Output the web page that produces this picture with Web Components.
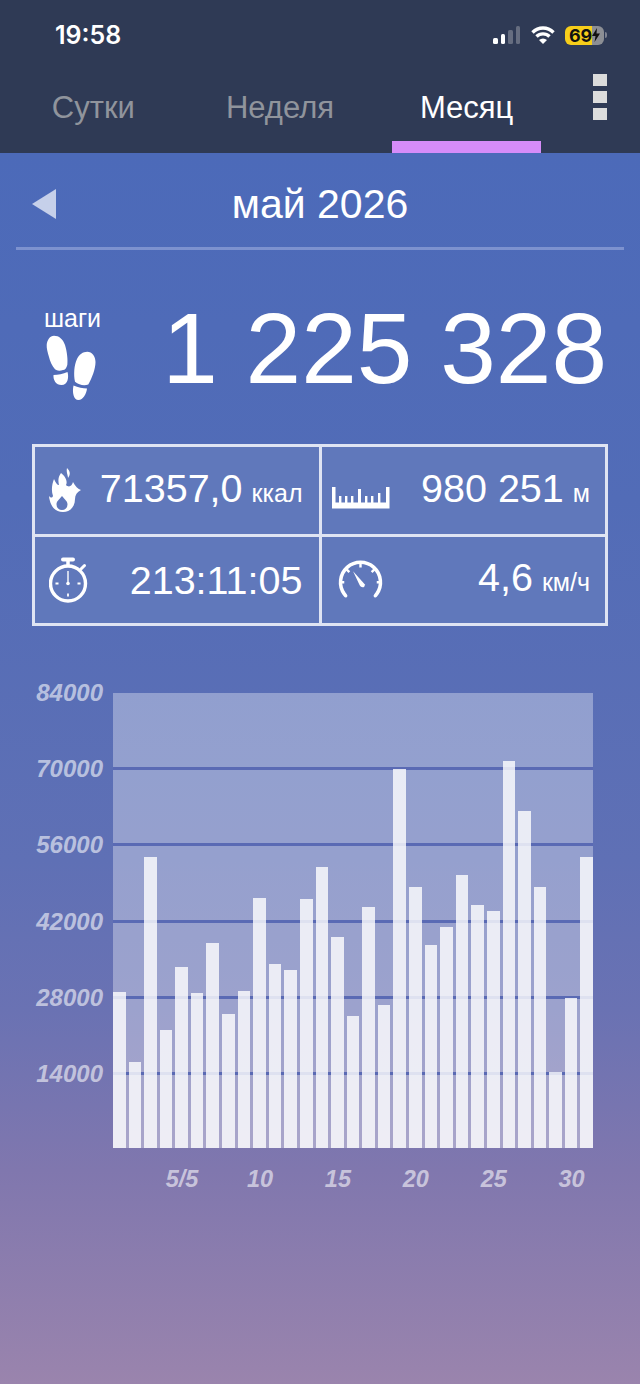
<!DOCTYPE html>
<html lang="ru">
<head>
<meta charset="utf-8">
<title>Шаги</title>
<style>
    html, body { margin: 0; padding: 0; }
    body { width: 640px; height: 1384px; overflow: hidden; font-family: "Liberation Sans", Arial, sans-serif; color: #fff; }
</style>
</head>
<body>
<app-screen>
    <status-bar time="19:58" battery="69"></status-bar>
    <tab-bar>
        <tab-item>Сутки</tab-item>
        <tab-item>Неделя</tab-item>
        <tab-item active>Месяц</tab-item>
    </tab-bar>
    <month-header>май 2026</month-header>
    <steps-total value="1 225 328" label="шаги"></steps-total>
    <stat-grid>
        <stat-cell icon="flame" value="71357,0" unit="ккал"></stat-cell>
        <stat-cell icon="ruler" value="980 251" unit="м" inset></stat-cell>
        <stat-cell icon="watch" value="213:11:05"></stat-cell>
        <stat-cell icon="gauge" value="4,6" unit="км/ч" inset></stat-cell>
    </stat-grid>
    <step-chart></step-chart>
</app-screen>

<script>
const ICONS = {
    flame: `<svg width="32" height="44" viewBox="0 0 32 44" fill="#fff">
        <path d="M18 0C21 3 22 6 19 10C19 7 17 4 18 0Z"/>
        <path fill-rule="evenodd" d="M12 5C16 8 19 13 17 17C20 20 23 18 24 14C26 18 29 21 32 22C28 24 26 27 26 31C26 39 21 44 14 44C6 44 1 38 0 28C2 30 3 30 4 28C2 23 3 16 5 11C7 15 8 17 10 17C9 13 9 9 12 5ZM13 28C10 32 7.500 33 7.500 36.500A5.500 5.500 0 0 0 18.500 36.500C18.500 33 16 32 13 28Z"/>
    </svg>`,
    ruler: `<svg style="margin-top:16px" width="58" height="22" viewBox="0 0 58 22" fill="#fff">
        <path d="M0 0H3.500V15.500H54V0H57.500V21.500H0Z"/>
        <path d="M7 9h2.400v7H7zM13 9h2.400v7H13zM19 9h2.400v7H19zM26 2h3v14h-3zM33 9h2.400v7H33zM39 9h2.400v7H39zM46 6h2.400v10H46z"/>
    </svg>`,
    watch: `<svg width="40" height="46" viewBox="0 0 40 46" fill="none" stroke="#fff">
        <circle cx="19" cy="26.500" r="17.500" stroke-width="3.400"/>
        <path d="M14 2.500H24" stroke-width="4" stroke-linecap="round"/>
        <path d="M19 3V9" stroke-width="3.500"/>
        <path d="M32 12L35.500 8.500" stroke-width="3" stroke-linecap="round"/>
        <path d="M19 14V26" stroke-width="1.400"/>
        <circle cx="19" cy="26.500" r="1.800" fill="#fff" stroke="none"/>
        <path d="M19 39.500V36.500M6.500 26.500H9.500M31.500 26.500H28.500" stroke-width="1.800"/>
    </svg>`,
    gauge: `<svg width="47" height="39" viewBox="0 0 50 42" fill="none" stroke="#fff">
        <path d="M9 38.500L7.500 36.500A21.500 21.500 0 1 1 42.500 36.500L41 38.500" stroke-width="3.800" stroke-linecap="round"/>
        <path d="M25 3V8M10 10L13 13M40 10L37 13M3.500 24H7.500M46.500 24H42.500" stroke-width="2.600"/>
        <path d="M17 12L24 27C26 31 30.500 29.500 29.500 26Z" fill="#fff" stroke="none"/>
    </svg>`
};

const STEPS = [
    28800, 15880, 53720, 21780, 33420, 28620, 37850, 24740, 28990, 46150, 33970,
    32860, 45970, 51880, 38950, 24370, 44490, 26400, 69970, 48180, 37480, 40800,
    50400, 44860, 43750, 71450, 62210, 48180, 14030, 27690, 53720
];
const CHART_MAX = 84000;

class AppScreen extends HTMLElement {
    constructor() {
        super();
        this.attachShadow({ mode: 'open' });
    }

    connectedCallback() {
        this.shadowRoot.innerHTML = `
            <style>
                :host {
                    display: block;
                    width: 640px; height: 1384px;
                    background: linear-gradient(180deg, #2f3a55 0, #2f3a55 153px, #4c6ab9 153px, #526cb7 500px, #5f70b5 860px, #6a72b3 1010px, #8077ae 1170px, #9a84ad 1384px);
                }
            </style>
            <slot></slot>
        `;
    }
}

class StatusBar extends HTMLElement {
    constructor() {
        super();
        this.attachShadow({ mode: 'open' });
    }

    connectedCallback() {
        const time = this.getAttribute('time') || '';
        const battery = this.getAttribute('battery') || '';
        this.shadowRoot.innerHTML = `
            <style>
                :host {
                    display: flex; align-items: center;
                    height: 60px; padding: 10px 33px 0 55px;
                    box-sizing: border-box;
                }
                .time { font: 600 25px/30px Inter, sans-serif; color: #fff; flex: 1; }
                .signal { display: flex; align-items: flex-end; gap: 3px; height: 18px; margin-right: 11px; }
                .signal i { display: block; width: 4.500px; border-radius: 1.500px; background: #fff; }
                .signal i.off { background: #666d80; }
                .wifi { display: block; margin-right: 10px; }
                .battery {
                    display: flex; align-items: center; justify-content: center;
                    width: 39px; height: 19px; border-radius: 6px;
                    background: linear-gradient(90deg, #f7ce1a 68%, #8c8e94 68%);
                    font: 700 18px/19px Inter, sans-serif; letter-spacing: -.3px; color: #111;
                }
                .tip { width: 2px; height: 6px; margin-left: 1px; border-radius: 0 2px 2px 0; background: #7d8190; }
            </style>
            <span class="time">${time}</span>
            <div class="signal">
                <i style="height:6px"></i><i style="height:10px"></i>
                <i class="off" style="height:14px"></i><i class="off" style="height:18px"></i>
            </div>
            <svg class="wifi" width="24" height="18" viewBox="0 0 24 18" fill="none" stroke="#fff" stroke-width="3.400">
                <path d="M1.500 6.500C7.500 0.500 16.500 0.500 22.500 6.500"/>
                <path d="M5.500 10.500C9 7 15 7 18.500 10.500"/>
                <path d="M12 18L8 14C10.500 12 13.500 12 16 14Z" fill="#fff" stroke="none"/>
            </svg>
            <div class="battery">${battery}<svg width="8" height="14" viewBox="0 0 8 14"><path d="M5 0L0 8H3.500L2.500 14L8 5.500H4.500Z" fill="#111"/></svg></div>
            <div class="tip"></div>
        `;
    }
}

class TabBar extends HTMLElement {
    constructor() {
        super();
        this.attachShadow({ mode: 'open' });
    }

    connectedCallback() {
        this.shadowRoot.innerHTML = `
            <style>
                :host { display: flex; height: 93px; }
                .tabs { display: grid; grid-template-columns: repeat(3, 1fr); width: 560px; }
                .menu { display: flex; flex-direction: column; gap: 5px; margin: 14px 0 0 33px; }
                .menu i { display: block; width: 14px; height: 12px; background: #dcdcdc; }
            </style>
            <div class="tabs"><slot></slot></div>
            <div class="menu"><i></i><i></i><i></i></div>
        `;
    }
}

class TabItem extends HTMLElement {
    constructor() {
        super();
        this.attachShadow({ mode: 'open' });
    }

    connectedCallback() {
        this.shadowRoot.innerHTML = `
            <style>
                :host { display: flex; flex-direction: column; align-items: center; color: #90949c; }
                :host([active]) { color: #fff; }
                .label { height: 81px; padding-top: 30px; box-sizing: border-box; font-size: 31px; line-height: 36px; }
                .bar { width: 149px; height: 12px; }
                :host([active]) .bar { background: #d68cf9; }
            </style>
            <div class="label"><slot></slot></div>
            <div class="bar"></div>
        `;
    }
}

class MonthHeader extends HTMLElement {
    constructor() {
        super();
        this.attachShadow({ mode: 'open' });
    }

    connectedCallback() {
        this.shadowRoot.innerHTML = `
            <style>
                :host {
                    display: grid; grid-template-columns: 1fr auto 1fr; align-items: center;
                    height: 97px; margin: 0 16px; padding: 8px 0 0 16px;
                    box-sizing: border-box;
                    border-bottom: 3px solid #7d92cf;
                }
                .arrow { width: 0; height: 0; border: solid transparent; border-width: 15px 24px 15px 0; border-right-color: #c6d0ea; }
                .title { font-size: 41px; line-height: 46px; color: #fff; margin-left: -16px; }
            </style>
            <div class="arrow"></div>
            <div class="title"><slot></slot></div>
        `;
    }
}

class StepsTotal extends HTMLElement {
    constructor() {
        super();
        this.attachShadow({ mode: 'open' });
    }

    connectedCallback() {
        this.shadowRoot.innerHTML = `
            <style>
                :host {
                    display: flex; justify-content: space-between; align-items: flex-start;
                    height: 194px; padding: 0 33px 0 44px;
                    box-sizing: border-box;
                }
                .label { font-size: 25px; line-height: 24px; margin-top: 56px; }
                .feet { display: block; margin: 5px 0 0 2px; }
                .value { font-size: 100px; line-height: 110px; margin-top: 43px; white-space: nowrap; }
            </style>
            <div>
                <div class="label">${this.getAttribute('label')}</div>
                <svg class="feet" width="50" height="66" viewBox="0 0 50 66" fill="#fff">
                    <path d="M8 .7C13 .7 17 4 19 10C21 16 22 25 21.300 30C20.500 33 19 35 17 35C14 36 11 36 9 34.300C6 31 4 26 3 22C1.500 17 .5 13 .7 10C1 5 4 .7 8 .7Z"/>
                    <path d="M7.500 40C12 40 17 39 21.500 37C23 42 22 50 15.500 50C10 50 7 45 7.500 40Z"/>
                    <path d="M41.300 16.700C46 16.700 49.500 21 49.500 27C49.500 34 46 43 42.300 49.500C38 51 33 50 29 46.700C27.500 40 28 30 31 24C33 19.500 37 16.700 41.300 16.700Z"/>
                    <path d="M27.500 50.500C32 52.500 37 53.500 41 53.500C40.500 59 37 65 32.500 65C27.500 65 26 57 27.500 50.500Z"/>
                </svg>
            </div>
            <div class="value">${this.getAttribute('value')}</div>
        `;
    }
}

class StatGrid extends HTMLElement {
    constructor() {
        super();
        this.attachShadow({ mode: 'open' });
    }

    connectedCallback() {
        this.shadowRoot.innerHTML = `
            <style>
                :host {
                    display: grid; grid-template-columns: 1fr 1fr; grid-template-rows: 1fr 1fr; gap: 3px;
                    width: 576px; height: 182px; margin: 0 32px;
                    box-sizing: border-box;
                    border: 3px solid #dfe4f3;
                    background: #dfe4f3;
                }
            </style>
            <slot></slot>
        `;
    }
}

class StatCell extends HTMLElement {
    constructor() {
        super();
        this.attachShadow({ mode: 'open' });
    }

    connectedCallback() {
        const unit = this.getAttribute('unit');
        this.shadowRoot.innerHTML = `
            <style>
                :host {
                    display: flex; align-items: center; justify-content: space-between;
                    padding: 0 16px 0 14px;
                    background: #6078bb;
                    white-space: nowrap;
                }
                :host([inset]) { padding: 0 15px 0 10px; }
                :host([icon="gauge"]) { padding-left: 15px; }
                svg { display: block; }
                .value { font-size: 39.500px; line-height: 44px; }
                .unit { font-size: 25px; margin-left: 9px; }
            </style>
            ${ICONS[this.getAttribute('icon')]}
            <div class="value">${this.getAttribute('value')}${unit ? `<span class="unit">${unit}</span>` : ''}</div>
        `;
    }
}

class StepChart extends HTMLElement {
    constructor() {
        super();
        this.attachShadow({ mode: 'open' });
    }

    connectedCallback() {
        const yLabels = [84000, 70000, 56000, 42000, 28000, 14000];
        const xLabels = { 5: '5/5', 10: '10', 15: '15', 20: '20', 25: '25', 30: '30' };
        const bars = STEPS.map(v => `<i style="height:${v / CHART_MAX * 100}%"></i>`).join('');
        const ticks = Object.keys(xLabels)
            .map(d => `<span style="grid-column:${d}">${xLabels[d]}</span>`).join('');
        this.shadowRoot.innerHTML = `
            <style>
                :host {
                    display: grid; grid-template-columns: 113px 480px; grid-template-rows: 455px auto;
                    margin-top: 67px;
                    font: italic 700 24px "Liberation Sans", Arial, sans-serif;
                    color: rgba(255,255,255,.58);
                }
                .y { display: grid; grid-template-rows: repeat(5, 76.200px) 1fr; justify-items: end; padding-right: 10px; line-height: 0; }
                .y span { height: 0; }
                .plot { position: relative; background: rgba(255,255,255,.34); }
                .lines { position: absolute; inset: 0; display: grid; grid-template-rows: repeat(5, 76.200px) 1fr; }
                .lines i { border-top: 3px solid #5a6ab4; margin-top: -2px; }
                .lines i:first-child { border-color: transparent; }
                .bars { position: absolute; inset: 0; display: grid; grid-template-columns: repeat(31, 1fr); column-gap: 3px; align-items: end; }
                .bars i { display: block; background: rgba(255,255,255,.8); }
                .x { grid-column: 2; display: grid; grid-template-columns: repeat(31, minmax(0, 1fr)); column-gap: 3px; font-size: 23.500px; line-height: 26px; padding-top: 18px; }
                .x span { justify-self: center; white-space: nowrap; margin-left: 1px; }
            </style>
            <div class="y">${yLabels.map(v => `<span>${v}</span>`).join('')}</div>
            <div class="plot">
                <div class="lines"><i></i><i></i><i></i><i></i><i></i><i></i></div>
                <div class="bars">${bars}</div>
            </div>
            <div class="x">${ticks}</div>
        `;
    }
}

customElements.define('app-screen', AppScreen);
customElements.define('status-bar', StatusBar);
customElements.define('tab-bar', TabBar);
customElements.define('tab-item', TabItem);
customElements.define('month-header', MonthHeader);
customElements.define('steps-total', StepsTotal);
customElements.define('stat-grid', StatGrid);
customElements.define('stat-cell', StatCell);
customElements.define('step-chart', StepChart);
</script>
</body>
</html>
